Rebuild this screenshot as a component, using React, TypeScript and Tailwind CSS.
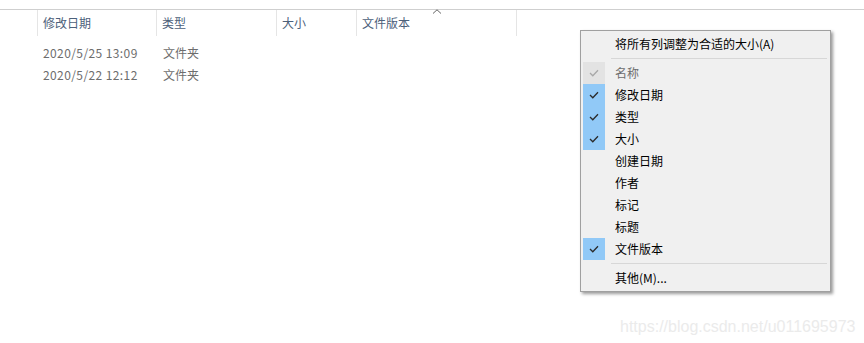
import React from "react";

const font = { fontFamily: '"Noto Sans CJK SC", "Noto Sans", sans-serif' };

const columns = [
  { label: "修改日期", w: "w-[119px]" },
  { label: "类型", w: "w-[120px]" },
  { label: "大小", w: "w-[80px]" },
  { label: "文件版本", w: "w-[160px]", sorted: true },
];

const rows = [
  { date: "2020/5/25 13:09", type: "文件夹" },
  { date: "2020/5/22 12:12", type: "文件夹" },
];

const menuItems = [
  { label: "名称", checked: true, disabled: true },
  { label: "修改日期", checked: true },
  { label: "类型", checked: true },
  { label: "大小", checked: true },
  { label: "创建日期" },
  { label: "作者" },
  { label: "标记" },
  { label: "标题" },
  { label: "文件版本", checked: true },
];

function Check({ light }: { light?: boolean }) {
  return (
    <svg width="10" height="8" viewBox="0 0 10 8" fill="none">
      <path
        d="M1 4 L3.8 6.8 L9 1.2"
        stroke={light ? "#a8a8a8" : "#2b2b2b"}
        strokeWidth="1.3"
      />
    </svg>
  );
}

function Row({ label, checked, disabled }: { label: string; checked?: boolean; disabled?: boolean }) {
  return (
    <div className="flex h-[22px] items-center">
      <div
        className={
          "ml-[2px] flex h-[22px] w-[22px] items-center justify-center " +
          (checked ? (disabled ? "bg-[#e3e3e3]" : "bg-[#91c9f7]") : "")
        }
      >
        {checked && <Check light={disabled} />}
      </div>
      <span className={"ml-[10px] text-[12px] " + (disabled ? "text-[#6d6d6d]" : "text-black")}>
        {label}
      </span>
    </div>
  );
}

function Separator() {
  return (
    <div className="flex h-[7px] items-center pl-[30px] pr-[3px]">
      <div className="h-px w-full bg-[#d7d7d7]" />
    </div>
  );
}

export default function App() {
  return (
    <div className="relative h-[343px] w-[864px] overflow-hidden bg-white" style={font}>
      <div className="pt-[9px]">
        <div className="h-px w-full bg-[#cfcfcf]" />
        <div className="flex h-[26px]">
          <div className="w-[37px]" />
          {columns.map((c) => (
            <div
              key={c.label}
              className={"relative flex items-center border-l border-[#e5e5e5] pl-[5px] " + c.w}
            >
              {c.sorted && (
                <svg
                  className="absolute left-1/2 top-[-1px] -translate-x-1/2"
                  width="9"
                  height="5"
                  viewBox="0 0 9 5"
                  fill="none"
                >
                  <path d="M0.5 4.5 L4.5 0.8 L8.5 4.5" stroke="#666" strokeWidth="1" />
                </svg>
              )}
              <span className="mt-[-1px] text-[12px] text-[#4c607a]">{c.label}</span>
            </div>
          ))}
          <div className="border-l border-[#e5e5e5]" />
        </div>
        <div className="mt-[6px]">
          {rows.map((r) => (
            <div key={r.date} className="flex h-[22px] items-center text-[12px] text-[#6d6d6d]">
              <div className="w-[38px]" />
              <div className="w-[120px] pl-[5px] tracking-[0.4px]">{r.date}</div>
              <div className="pl-[5px]">{r.type}</div>
            </div>
          ))}
        </div>
      </div>

      <div className="absolute left-[580px] top-[30px] w-[251px] border border-[#a0a0a0] bg-[#f0f0f0] pb-[2px] pt-[2px] shadow-[2px_2px_3px_rgba(0,0,0,0.4)]">
        <div className="flex h-[22px] items-center">
          <span className="ml-[34px] text-[12px] text-black">将所有列调整为合适的大小(A)</span>
        </div>
        <Separator />
        {menuItems.map((m) => (
          <Row key={m.label} {...m} />
        ))}
        <Separator />
        <div className="flex h-[22px] items-center">
          <span className="ml-[34px] text-[12px] text-black">其他(M)...</span>
        </div>
      </div>

      <div
        className="absolute left-[620px] top-[315px] text-[16px] text-[#ebebeb]"
        style={{ fontFamily: '"Liberation Sans", Arial, sans-serif' }}
      >
        https://blog.csdn.net/u011695973
      </div>
    </div>
  );
}
